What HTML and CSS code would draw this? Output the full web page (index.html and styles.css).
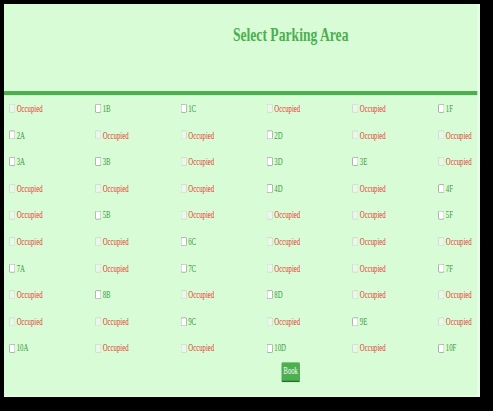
FILE: index.html
```html
<!DOCTYPE html>
<html lang="en">
<head>
<meta charset="utf-8">
<title>Select Parking Area</title>
<link rel="stylesheet" href="styles.css">
</head>
<body>
<div class="viewport">
<div class="frame">
  <div class="header"><h1 class="title">Select Parking Area</h1></div>
  <div class="rule"></div>
  <div class="grid">
    <label class="slot occupied"><input type="checkbox" disabled><span>Occupied</span></label>
    <label class="slot"><input type="checkbox"><span>1B</span></label>
    <label class="slot"><input type="checkbox"><span>1C</span></label>
    <label class="slot occupied"><input type="checkbox" disabled><span>Occupied</span></label>
    <label class="slot occupied"><input type="checkbox" disabled><span>Occupied</span></label>
    <label class="slot"><input type="checkbox"><span>1F</span></label>

    <label class="slot"><input type="checkbox"><span>2A</span></label>
    <label class="slot occupied"><input type="checkbox" disabled><span>Occupied</span></label>
    <label class="slot occupied"><input type="checkbox" disabled><span>Occupied</span></label>
    <label class="slot"><input type="checkbox"><span>2D</span></label>
    <label class="slot occupied"><input type="checkbox" disabled><span>Occupied</span></label>
    <label class="slot occupied"><input type="checkbox" disabled><span>Occupied</span></label>

    <label class="slot"><input type="checkbox"><span>3A</span></label>
    <label class="slot"><input type="checkbox"><span>3B</span></label>
    <label class="slot occupied"><input type="checkbox" disabled><span>Occupied</span></label>
    <label class="slot"><input type="checkbox"><span>3D</span></label>
    <label class="slot"><input type="checkbox"><span>3E</span></label>
    <label class="slot occupied"><input type="checkbox" disabled><span>Occupied</span></label>

    <label class="slot occupied"><input type="checkbox" disabled><span>Occupied</span></label>
    <label class="slot occupied"><input type="checkbox" disabled><span>Occupied</span></label>
    <label class="slot occupied"><input type="checkbox" disabled><span>Occupied</span></label>
    <label class="slot"><input type="checkbox"><span>4D</span></label>
    <label class="slot occupied"><input type="checkbox" disabled><span>Occupied</span></label>
    <label class="slot"><input type="checkbox"><span>4F</span></label>

    <label class="slot occupied"><input type="checkbox" disabled><span>Occupied</span></label>
    <label class="slot"><input type="checkbox"><span>5B</span></label>
    <label class="slot occupied"><input type="checkbox" disabled><span>Occupied</span></label>
    <label class="slot occupied"><input type="checkbox" disabled><span>Occupied</span></label>
    <label class="slot occupied"><input type="checkbox" disabled><span>Occupied</span></label>
    <label class="slot"><input type="checkbox"><span>5F</span></label>

    <label class="slot occupied"><input type="checkbox" disabled><span>Occupied</span></label>
    <label class="slot occupied"><input type="checkbox" disabled><span>Occupied</span></label>
    <label class="slot"><input type="checkbox"><span>6C</span></label>
    <label class="slot occupied"><input type="checkbox" disabled><span>Occupied</span></label>
    <label class="slot occupied"><input type="checkbox" disabled><span>Occupied</span></label>
    <label class="slot occupied"><input type="checkbox" disabled><span>Occupied</span></label>

    <label class="slot"><input type="checkbox"><span>7A</span></label>
    <label class="slot occupied"><input type="checkbox" disabled><span>Occupied</span></label>
    <label class="slot"><input type="checkbox"><span>7C</span></label>
    <label class="slot occupied"><input type="checkbox" disabled><span>Occupied</span></label>
    <label class="slot occupied"><input type="checkbox" disabled><span>Occupied</span></label>
    <label class="slot"><input type="checkbox"><span>7F</span></label>

    <label class="slot occupied"><input type="checkbox" disabled><span>Occupied</span></label>
    <label class="slot"><input type="checkbox"><span>8B</span></label>
    <label class="slot occupied"><input type="checkbox" disabled><span>Occupied</span></label>
    <label class="slot"><input type="checkbox"><span>8D</span></label>
    <label class="slot occupied"><input type="checkbox" disabled><span>Occupied</span></label>
    <label class="slot occupied"><input type="checkbox" disabled><span>Occupied</span></label>

    <label class="slot occupied"><input type="checkbox" disabled><span>Occupied</span></label>
    <label class="slot occupied"><input type="checkbox" disabled><span>Occupied</span></label>
    <label class="slot"><input type="checkbox"><span>9C</span></label>
    <label class="slot occupied"><input type="checkbox" disabled><span>Occupied</span></label>
    <label class="slot"><input type="checkbox"><span>9E</span></label>
    <label class="slot occupied"><input type="checkbox" disabled><span>Occupied</span></label>

    <label class="slot"><input type="checkbox"><span>10A</span></label>
    <label class="slot occupied"><input type="checkbox" disabled><span>Occupied</span></label>
    <label class="slot occupied"><input type="checkbox" disabled><span>Occupied</span></label>
    <label class="slot"><input type="checkbox"><span>10D</span></label>
    <label class="slot occupied"><input type="checkbox" disabled><span>Occupied</span></label>
    <label class="slot"><input type="checkbox"><span>10F</span></label>
  </div>
  <div class="actions"><button class="book" type="button">Book</button></div>
</div>
</div>
</body>
</html>
```

FILE: styles.css
```css
html, body {
  margin: 0;
  padding: 0;
  background: #000;
  overflow: hidden;
}

body {
  padding: 4px;
  font-family: "Liberation Serif", "Times New Roman", serif;
}

.viewport {
  width: 476px;
  height: 393px;
  overflow: hidden;
}

.frame {
  width: 1013px;
  height: 578px;
  background: #d8fcd6;
  overflow: hidden;
  transform: scale(0.47, 0.68);
  transform-origin: 0 0;
  box-shadow: inset -6px -2px 0 #e6fee6;
}

.header {
  height: 128px;
  text-align: center;
  box-sizing: border-box;
  padding-top: 30px;
  padding-left: 207px;
}

.title {
  margin: 0;
  font-size: 29px;
  line-height: 28px;
  font-weight: bold;
  color: #4caf50;
}

.rule {
  height: 6px;
  width: 1007px;
  background: #4caf50;
}

.grid {
  display: grid;
  grid-template-columns: repeat(6, 182.5px);
  grid-auto-rows: 39.2px;
  padding-left: 7px;
}

.slot {
  display: flex;
  align-items: center;
  font-size: 16px;
  color: #3a9a3e;
  white-space: nowrap;
}

.slot input {
  margin: 3px 3px 3px 4px;
}

.slot span {
  display: inline-block;
  transform: scaleX(0.9);
  transform-origin: 0 50%;
}

.slot.occupied {
  color: #e53935;
}

.actions {
  text-align: center;
  padding-top: 1px;
  padding-left: 207px;
}

.book {
  width: 38px;
  height: 27px;
  padding: 0;
  border: none;
  background: #4caf50;
  color: #fff;
  font-family: "Liberation Serif", "Times New Roman", serif;
  font-size: 14px;
  box-shadow: 0 2px 0 #2e6b31;
}
```
